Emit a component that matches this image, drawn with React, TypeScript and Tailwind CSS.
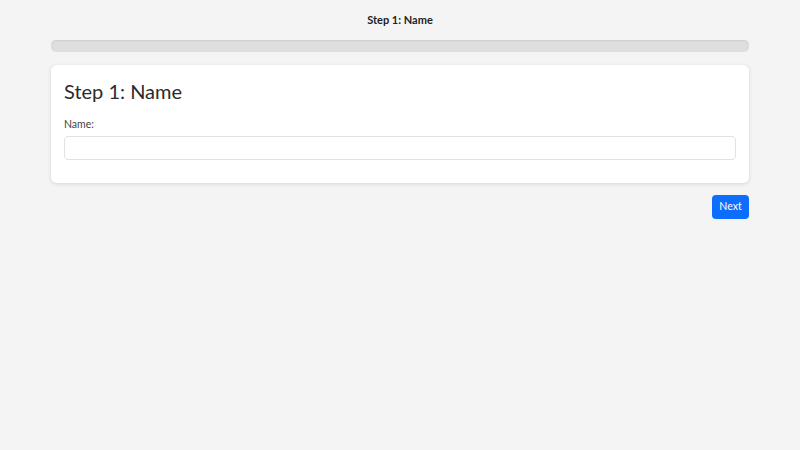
import React, { useState } from "react";

export default function App() {
  const [name, setName] = useState("");

  return (
    <div className="min-h-[450px] bg-[#f4f4f4] font-['Lato','Open_Sans',sans-serif] text-[#222]">
      <div className="mx-auto w-[698px] pt-[13px]">
        <h2 className="text-center text-[11px] font-bold leading-[14px]">Step 1: Name</h2>

        <div className="mt-[13px] h-[12px] w-full rounded-[5px] bg-[#dedede] shadow-[inset_0_1px_2px_rgba(0,0,0,0.08)]" />

        <div className="mt-[13px] rounded-[6px] bg-white px-[13px] pt-[13px] pb-[23px] shadow-[0_1px_4px_rgba(0,0,0,0.12)]">
          <h1 className="text-[20px] font-normal leading-[26px] text-[#2b2b2b]">Step 1: Name</h1>
          <label className="mt-[13px] block text-[10.5px] leading-[14px] text-[#444]">Name:</label>
          <input
            value={name}
            onChange={(e) => setName(e.target.value)}
            className="mt-[5px] block h-[24px] w-full rounded-[4px] border border-[#e2e2e2] bg-white px-2 text-[11px] outline-none"
          />
        </div>

        <div className="mt-[12px] flex justify-end">
          <button className="h-[24px] w-[37px] rounded-[4px] bg-[#0d6efd] text-[10.5px] text-white">Next</button>
        </div>
      </div>
    </div>
  );
}
